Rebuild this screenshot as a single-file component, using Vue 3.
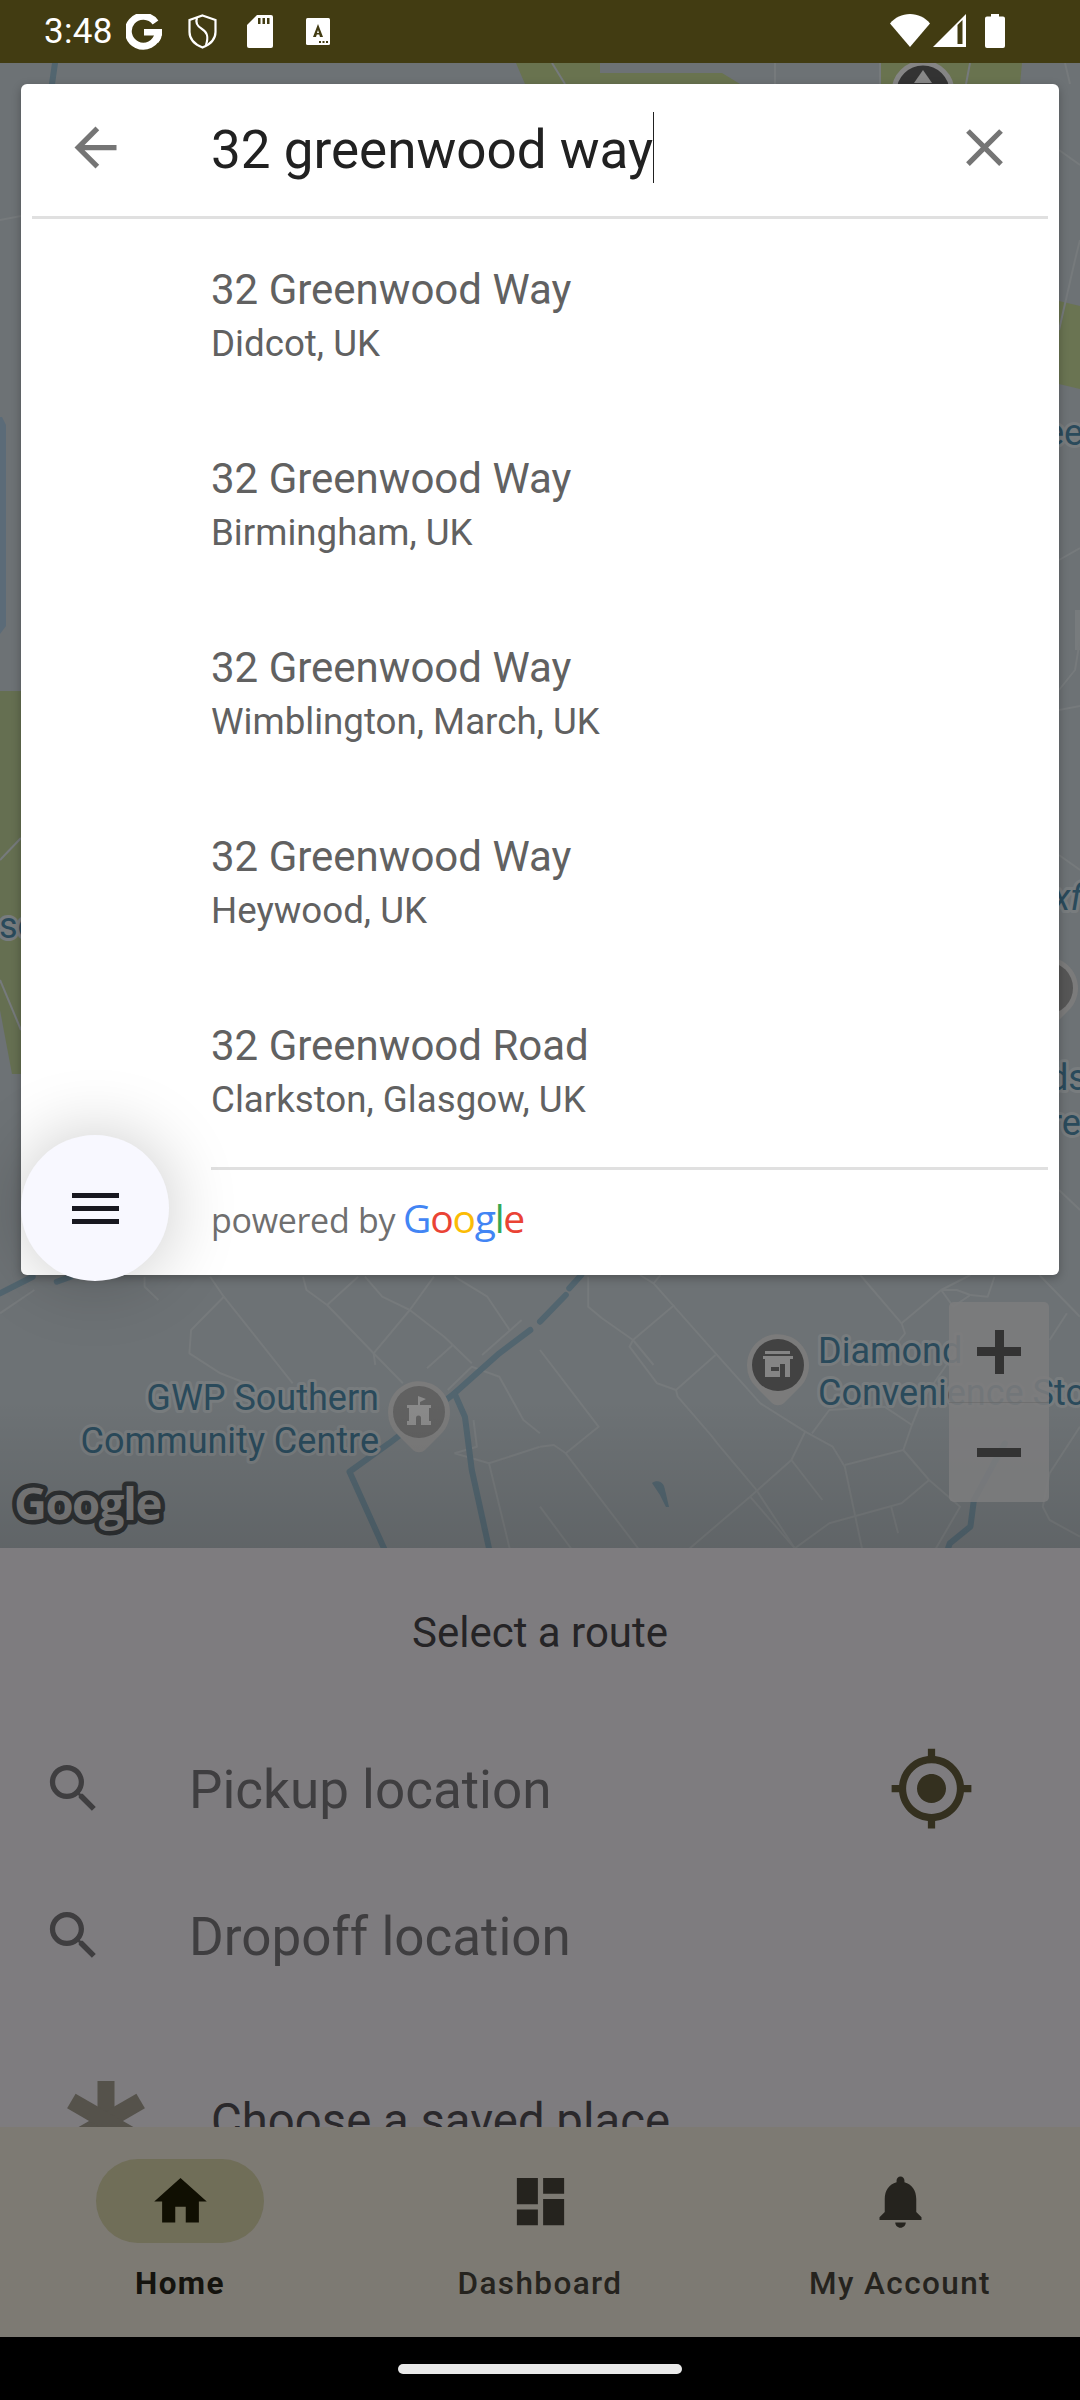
<script setup>
const z3 = (pts) => pts.map(([x, y]) => `${(x / 2.904).toFixed(1)},${(1100 + y / 3).toFixed(1)}`).join(' ')
const z4 = (pts) => pts.map(([x, y]) => `${(540 + x / 2.904).toFixed(1)},${(1240 + y / 3).toFixed(1)}`).join(' ')

const thinRoads = [
  ...[
    [[610,530],[650,590],[850,850]],
    [[650,590],[555,690],[550,760],[640,820],[740,860]],
    [[880,530],[890,570],[950,615],[1085,760],[1170,850]],
    [[1060,530],[1110,590],[1190,630],[1290,710],[1370,790]],
    [[1260,530],[1190,630],[1085,760],[1090,795]],
    [[950,615],[1040,530]],
    [[1240,805],[1315,735]],
    [[1400,765],[1515,660]],
    [[1320,530],[1415,590],[1480,690]],
    [[1300,870],[1370,800],[1450,830],[1520,960],[1568,1000]],
    [[1320,1060],[1420,1090],[1568,1040]],
    [[1420,1090],[1480,1345]],
    [[1375,960],[1385,1040],[1320,1060]],
    [[420,530],[420,560],[460,600]],
    [[0,640],[100,570]]
  ].map(z3),
  ...[
    [[330,130],[510,340],[640,490],[770,575],[850,620],[885,680],[935,925]],
    [[290,105],[330,130],[350,105]],
    [[140,110],[140,200],[180,235],[270,300],[330,375]],
    [[390,195],[270,300],[260,320],[340,430],[395,450]],
    [[510,345],[395,450],[400,470],[500,590],[515,610],[625,745],[740,925]],
    [[770,575],[730,660],[610,770],[435,925]],
    [[730,660],[820,780]],
    [[885,675],[1055,630],[1130,720],[1220,800],[1150,925]],
    [[790,580],[840,510],[1000,500],[1080,555],[1055,630]],
    [[1080,555],[1110,480],[1230,300]],
    [[0,330],[170,560],[75,640],[285,925]],
    [[0,620],[40,615],[75,640]],
    [[0,800],[90,925]],
    [[610,770],[740,925]],
    [[740,925],[840,850],[1050,790],[1130,720]],
    [[1020,800],[1040,880]],
    [[930,105],[1050,250],[1060,280],[990,370]],
    [[1050,250],[1165,150],[1250,105]],
    [[1165,150],[1200,200],[1250,165],[1210,150],[1165,150]],
    [[1320,110],[1300,170],[1250,165]],
    [[1450,105],[1568,230]],
    [[1480,300],[1530,220]],
    [[1568,560],[1480,700],[1460,800],[1480,840],[1568,890]]
  ].map(z4),
  '1059,150 1080,165', '1059,330 1075,260 1080,240', '1059,560 1080,548', '1059,690 1075,670 1080,640',
  '1059,710 1080,706', '1059,855 1080,870', '1059,1190 1080,1210',
  '21,838 0,860', '0,980 21,1030', '0,220 21,216',
  '775,63 775,84', '880,63 880,84', '970,63 966,84', '1065,63 1070,84', '552,63 565,84'
]

const rivers = [
  z3([[1540,690],[1450,760],[1320,880],[1350,950],[1370,1110],[1420,1345]]),
  z3([[1320,880],[1130,1030],[1015,1115],[1115,1345]]),
  z3([[0,580],[95,530]]),
  z3([[165,545],[205,530]]),
  z4([[120,105],[85,145]]),
  z4([[75,165],[0,245]]),
  z4([[1350,610],[1260,780],[1250,860],[1190,910],[1185,925]]),
  '55,63 52,84'
]

const results = [
  { title: '32 Greenwood Way', sub: 'Didcot, UK' },
  { title: '32 Greenwood Way', sub: 'Birmingham, UK' },
  { title: '32 Greenwood Way', sub: 'Wimblington, March, UK' },
  { title: '32 Greenwood Way', sub: 'Heywood, UK' },
  { title: '32 Greenwood Road', sub: 'Clarkston, Glasgow, UK' }
]

const searchPath = 'M15.5 14h-.79l-.28-.27C15.41 12.59 16 11.11 16 9.5 16 5.91 13.09 3 9.5 3S3 5.91 3 9.5 5.91 16 9.5 16c1.61 0 3.09-.59 4.23-1.57l.27.28v.79l5 4.99L20.49 19l-4.99-5zm-6 0C7.01 14 5 11.99 5 9.5S7.01 5 9.5 5 14 7.01 14 9.5 11.99 14 9.5 14z'
const gpsPath = 'M12 8c-2.21 0-4 1.79-4 4s1.79 4 4 4 4-1.79 4-4-1.79-4-4-4zm8.94 3c-.46-4.17-3.77-7.48-7.94-7.94V1h-2v2.06C6.83 3.52 3.52 6.83 3.06 11H1v2h2.06c.46 4.17 3.77 7.48 7.94 7.94V23h2v-2.06c4.17-.46 7.48-3.77 7.94-7.94H23v-2h-2.06zM12 19c-3.87 0-7-3.13-7-7s3.13-7 7-7 7 3.13 7 7-3.13 7-7 7z'

const tabs = [
  { label: 'Home', active: true, d: 'M10 20v-6h4v6h5v-8h3L12 3 2 12h3v8z' },
  { label: 'Dashboard', active: false, d: 'M3 13h8V3H3v10zm0 8h8v-6H3v6zm10 0h8V11h-8v10zm0-18v6h8V3h-8z' },
  { label: 'My Account', active: false, d: 'M12 22c1.1 0 2-.9 2-2h-4c0 1.1.89 2 2 2zm6-6v-5c0-3.07-1.64-5.64-4.5-6.32V4c0-.83-.67-1.5-1.5-1.5s-1.5.67-1.5 1.5v.68C7.63 5.36 6 7.92 6 11v5l-2 2v1h16v-1l-2-2z' }
]
</script>

<template>
  <div class="screen">
    <header class="status">
      <span class="time">3:48</span>
      <svg class="st st-g" viewBox="0 0 36 36"><path d="M29.5 8.5A15 15 0 1 0 32 20" fill="none" stroke="#fff" stroke-width="7"/><rect x="18" y="15" width="18" height="6.5" fill="#fff"/><path d="M36 15v3c0 4-1 8-4 11l-4-4c2-2 3-5 3-7z" fill="#fff"/></svg>
      <svg class="st st-shield" viewBox="0 0 29 35"><path d="M14.5 1.5 27.5 6v12c0 7.500-5.500 12.500-13 15.500C7 30.500 1.500 25.500 1.500 18V6z" fill="none" stroke="#fff" stroke-width="2.200"/><path d="M9 4c-2 5 0 8 5 11s7 7 4 16" fill="none" stroke="#fff" stroke-width="2.200"/></svg>
      <svg class="st st-sd" viewBox="0 0 26 33"><path d="M10 0h14a2 2 0 0 1 2 2v29a2 2 0 0 1-2 2H2a2 2 0 0 1-2-2V10z" fill="#fff"/><rect x="11" y="3" width="2.500" height="6" fill="#423c12"/><rect x="15.500" y="3" width="2.500" height="6" fill="#423c12"/><rect x="20" y="3" width="2.500" height="6" fill="#423c12"/></svg>
      <svg class="st st-a" viewBox="0 0 24 27"><rect width="24" height="27" rx="1.500" fill="#fff"/><path d="M12 6l5 13h-3l-.8-2.500h-2.400L10 19H7zm0 6-1 3h2z" fill="#423c12"/><rect x="13" y="23" width="2" height="2" fill="#423c12"/><rect x="16.500" y="23" width="2" height="2" fill="#423c12"/><rect x="20" y="23" width="2" height="2" fill="#423c12"/></svg>
      <span class="status-gap"></span>
      <svg class="st st-wifi" viewBox="0 0 40 33"><path d="M0 9.500C5 3.500 12 0 20 0s15 3.500 20 9.500L20 33z" fill="#fff"/></svg>
      <svg class="st st-signal" viewBox="0 0 33 33"><path d="M0 33 33 0v33z" fill="#fff"/><path d="M24.500 11v19h5V6z" fill="#423c12"/></svg>
      <svg class="st st-batt" viewBox="0 0 20 34"><path d="M6 0h8v2.500h4a2 2 0 0 1 2 2V32a2 2 0 0 1-2 2H2a2 2 0 0 1-2-2V4.500a2 2 0 0 1 2-2h4z" fill="#fff"/></svg>
    </header>

    <section class="map">
      <svg class="map-art" viewBox="0 63 1080 1485" width="1080" height="1485">
        <defs>
          <linearGradient id="fade" x1="0" y1="0" x2="0" y2="1">
            <stop offset="0" stop-color="#000" stop-opacity="0"/>
            <stop offset="1" stop-color="#000" stop-opacity=".12"/>
          </linearGradient>
        </defs>
        <rect x="0" y="63" width="1080" height="1485" fill="#6d7275"/>
        <path d="M0 691H21V1074H12L0 1010z" fill="#656f51"/>
        <path d="M1059 301 1080 306V389L1059 384z" fill="#6a7452"/>
        <path d="M516 63H600L600 73H722L740 84H525z" fill="#69734f"/>
        <path d="M880 63H1022L1020 84H880z" fill="#69734f"/>
        <path d="M0 417H2L6 425V626L0 634z" fill="#5b6b78"/>
        <path d="M1075 610h5v40h-5z" fill="#777b7d"/>
        <polyline v-for="(r, i) in thinRoads" :key="'t' + i" :points="r" class="road"/>
        <polyline v-for="(r, i) in rivers" :key="'r' + i" :points="r" class="river"/>
        <path d="M652 1483c4-3 10-2 12 3l2 8 3 13h-3l-6-12z" fill="#52656f"/>

        <circle cx="923" cy="92" r="29" fill="#333" stroke="#858585" stroke-width="5"/>
        <path d="M923 70l9 13h-18z" fill="#888"/>

        <path d="M388 1412a31 31 0 1 1 52 23l-15 15c-3 3-9 3-12 0l-15-15a31 31 0 0 1-10-23z" fill="#7b7b7b"/>
        <circle cx="419" cy="1412" r="26" fill="#616161"/>
        <path d="M407 1425v-4h2v-13h-2v-3h11v-9l8 3-6 3v3h11v3h-2v13h2v4h-10v-7a2.500 2.500 0 0 0-5 0v7z" fill="#8a8a8a"/>

        <path d="M747 1365a31 31 0 1 1 52 23l-15 15c-3 3-9 3-12 0l-15-15a31 31 0 0 1-10-23z" fill="#7b7b7b"/>
        <circle cx="778" cy="1365" r="26" fill="#424242"/>
        <path d="M765 1351h25v3h-25zM763 1356h30v3h-3v18h-5v-13h-5v13h-15v-18h-2zM771 1367v4h8v-4z" fill="#858585" fill-rule="evenodd"/>

        <g class="label">
          <text x="379" y="1410" text-anchor="end">GWP Southern</text>
          <text x="379" y="1453" text-anchor="end">Community Centre</text>
          <text x="818" y="1363">Diamond</text>
          <text x="818" y="1405">Convenience Sto</text>
          <text x="-1" y="938">so</text>
          <text x="1045" y="445">eet</text>
          <text x="1053" y="910" font-style="italic">xfo</text>
          <text x="1048" y="1090">ds</text>
          <text x="1050" y="1135">re</text>
        </g>
        <path d="M1016 988a31 31 0 1 1 52 23l-15 15c-3 3-9 3-12 0l-15-15a31 31 0 0 1-10-23z" fill="#7b7b7b"/>
        <circle cx="1047" cy="988" r="26" fill="#565656"/>
        <text class="logo" x="14" y="1520">Google</text>
        <rect x="0" y="1400" width="1080" height="148" fill="url(#fade)"/>
      </svg>
      <div class="zoom">
        <div class="zoom-btn"><span class="plus"></span></div>
        <div class="zoom-btn"><span class="minus"></span></div>
      </div>
    </section>

    <section class="sheet">
      <h2 class="sheet-title">Select a route</h2>
      <div class="loc-row first">
        <svg class="ic63 search" viewBox="0 0 24 24"><path :d="searchPath"/></svg>
        <span class="loc-text">Pickup location</span>
        <svg class="gps" viewBox="0 0 24 24"><path :d="gpsPath"/></svg>
      </div>
      <div class="loc-row">
        <svg class="ic63 search" viewBox="0 0 24 24"><path :d="searchPath"/></svg>
        <span class="loc-text">Dropoff location</span>
      </div>
      <div class="saved-row">
        <svg class="star" viewBox="0 0 80 80">
          <g fill="#55524b">
            <rect x="31.500" y="0" width="17" height="80"/>
            <rect x="31.500" y="0" width="17" height="80" transform="rotate(60 40 40)"/>
            <rect x="31.500" y="0" width="17" height="80" transform="rotate(120 40 40)"/>
          </g>
        </svg>
        <span class="saved-text">Choose a saved place</span>
      </div>
    </section>

    <nav class="tabs">
      <div v-for="t in tabs" :key="t.label" class="tab" :class="{ active: t.active }">
        <div class="pill">
          <svg class="ic63" viewBox="0 0 24 24"><path :d="t.d"/></svg>
        </div>
        <span class="tab-label">{{ t.label }}</span>
      </div>
    </nav>

    <footer class="gesture"><span class="handle"></span></footer>

    <div class="card">
      <div class="search-head">
        <svg class="ic63 head-ic" viewBox="0 0 24 24"><path d="M20 11H7.830l5.590-5.590L12 4l-8 8 8 8 1.410-1.410L7.830 13H20v-2z"/></svg>
        <div class="query-wrap"><span class="query">32 greenwood way</span></div>
        <svg class="ic63 head-ic" viewBox="0 0 24 24"><path d="M19 6.410 17.590 5 12 10.590 6.410 5 5 6.410 10.590 12 5 17.590 6.410 19 12 13.410 17.590 19 19 17.590 13.410 12z"/></svg>
      </div>
      <div class="head-rule"></div>
      <ul class="results">
        <li v-for="(r, i) in results" :key="i" class="result">
          <div class="r-title">{{ r.title }}</div>
          <div class="r-sub">{{ r.sub }}</div>
        </li>
      </ul>
      <div class="foot-rule"></div>
      <div class="powered">
        <span class="pw">powered by</span>
        <span class="gl"><i class="b">G</i><i class="r">o</i><i class="y">o</i><i class="b">g</i><i class="g">l</i><i class="r">e</i></span>
      </div>
    </div>

    <button class="fab" type="button" aria-label="Menu">
      <span class="bar"></span><span class="bar"></span><span class="bar"></span>
    </button>
  </div>
</template>

<style scoped>
.screen { position: relative; width: 1080px; height: 2400px; overflow: hidden; display: flex; flex-direction: column; font-family: Roboto, "Liberation Sans", sans-serif; background: #000; }

.status { height: 63px; flex: none; background: #423c12; display: flex; align-items: flex-start; padding-left: 44px; box-sizing: border-box; }
.time { color: #fff; font-size: 35px; line-height: 41px; margin-top: 11px; width: 82px; letter-spacing: .3px; }
.st { display: block; flex: none; }
.st-g { width: 36px; height: 36px; margin-top: 14px; }
.st-shield { width: 29px; height: 35px; margin-top: 14px; margin-left: 26px; }
.st-sd { width: 26px; height: 33px; margin-top: 15px; margin-left: 30px; }
.st-a { width: 24px; height: 27px; margin-top: 18px; margin-left: 33px; }
.status-gap { flex: 1; }
.st-wifi { width: 40px; height: 33px; margin-top: 14px; }
.st-signal { width: 33px; height: 33px; margin-top: 14px; margin-left: 3px; }
.st-batt { width: 20px; height: 34px; margin-top: 14px; margin-left: 19px; margin-right: 75px; }

.map { position: relative; height: 1485px; flex: none; overflow: hidden; }
.map-art { display: block; }
.road { fill: none; stroke: #767a7c; stroke-width: 2; stroke-linejoin: round; }
.river { fill: none; stroke: #52656f; stroke-width: 6; stroke-linejoin: round; stroke-linecap: round; }
.label text { font-family: Roboto, sans-serif; font-size: 36px; fill: #2a4a5b; stroke: #787c7e; stroke-width: 6px; paint-order: stroke; stroke-linejoin: round; }
.logo { font-family: "Open Sans", sans-serif; font-weight: 700; font-size: 45.500px; letter-spacing: -1.500px; fill: #7b7b7b; stroke: #2e3133; stroke-width: 9px; paint-order: stroke; stroke-linejoin: round; }
.zoom { position: absolute; left: 949px; top: 1239px; width: 100px; height: 200px; border-radius: 5px; background: rgba(124, 124, 125, .88); display: flex; flex-direction: column; }
.zoom-btn { flex: 1; display: flex; align-items: center; justify-content: center; position: relative; }
.zoom-btn:first-child { border-bottom: 1px solid rgba(100, 100, 100, .5); }
.plus { position: relative; display: block; width: 44px; height: 44px; background: linear-gradient(#333, #333) center / 100% 9px no-repeat, linear-gradient(#333, #333) center / 9px 100% no-repeat; }
.minus { display: block; width: 44px; height: 9px; background: #333; }

.sheet { height: 579px; flex: none; background: #7e7c7f; overflow: hidden; box-sizing: border-box; padding-top: 60px; }
.sheet-title { margin: 0; font-size: 42px; line-height: 50px; font-weight: 400; text-align: center; color: #252426; }
.loc-row { display: flex; align-items: center; height: 147px; padding-left: 42px; }
.loc-row.first { margin-top: 56.500px; }
.ic63 { display: block; width: 63px; height: 63px; flex: none; }
.search path { fill: #3f3e40; }
.loc-text { margin-left: 84px; flex: 1; font-size: 53px; color: #3f3e40; line-height: 60px; padding-top: 4px; }
.gps { width: 87px; height: 87px; margin-right: 105px; flex: none; }
.gps path { fill: #34301f; }
.saved-row { display: flex; align-items: center; height: 80px; margin-top: 72.500px; padding-left: 65.500px; }
.star { width: 80px; height: 80px; flex: none; }
.saved-text { margin-left: 65.500px; font-size: 47.300px; line-height: 60px; color: #2a282b; }

.tabs { height: 210px; flex: none; background: #7d7a73; display: grid; grid-template-columns: repeat(3, 1fr); box-sizing: border-box; padding-top: 32px; }
.tab { display: flex; flex-direction: column; align-items: center; }
.pill { width: 168px; height: 84px; border-radius: 42px; display: flex; align-items: center; justify-content: center; }
.tab path { fill: #25231e; }
.tab-label { margin-top: 21px; font-size: 31.500px; line-height: 40px; font-weight: 500; letter-spacing: 1.400px; color: #25231e; }
.tab.active .pill { background: #706e58; }
.tab.active path { fill: #100f02; }
.tab.active .tab-label { font-weight: 700; color: #14130e; }

.gesture { flex: 1; background: #000; display: flex; justify-content: center; padding-top: 27px; box-sizing: border-box; }
.handle { width: 284px; height: 10px; border-radius: 5px; background: #e9e9e9; }

.card { position: absolute; left: 21px; top: 84px; width: 1038px; height: 1191px; background: #fff; border-radius: 6px; box-shadow: 0 3px 10px rgba(0, 0, 0, .28); }
.search-head { height: 132px; display: flex; align-items: center; padding: 0 43px 6px 43px; box-sizing: border-box; }
.head-ic path { fill: #757575; }
.query-wrap { flex: 1; padding-left: 84px; }
.query { display: inline-block; height: 71px; font-size: 53px; line-height: 77px; color: #212121; border-right: 1.500px solid #212121; }
.head-rule { height: 3px; margin: 0 11px; background: #e0e0e0; }
.results { list-style: none; margin: 0; padding: 0; }
.result { height: 189px; box-sizing: border-box; padding: 45px 0 0 190px; color: #616161; }
.r-title { font-size: 42px; line-height: 52px; }
.r-sub { font-size: 36.700px; line-height: 46px; margin-top: 5px; }
.foot-rule { height: 3px; margin: 3px 11px 0 190px; background: #e0e0e0; }
.powered { display: flex; align-items: baseline; padding-left: 190px; margin-top: 26px; line-height: 44px; }
.pw { font-size: 34px; color: #6f6f6f; font-family: "Open Sans", sans-serif; width: 192px; letter-spacing: -.3px; }
.gl { font-size: 39px; font-family: "Open Sans", sans-serif; font-weight: 500; letter-spacing: -1.200px; }
.gl i { font-style: normal; }
.b { color: #4285f4; } .r { color: #ea4335; } .y { color: #fbbc05; } .g { color: #34a853; }

.fab { position: absolute; left: 21px; top: 1135px; width: 148px; height: 146px; border: 0; padding: 0; border-radius: 50%; background: #f8f8ff; box-shadow: 0 0 70px rgba(0, 0, 0, .22); display: flex; flex-direction: column; align-items: center; justify-content: center; gap: 8px; }
.bar { display: block; width: 47px; height: 5px; background: #181820; }
</style>
